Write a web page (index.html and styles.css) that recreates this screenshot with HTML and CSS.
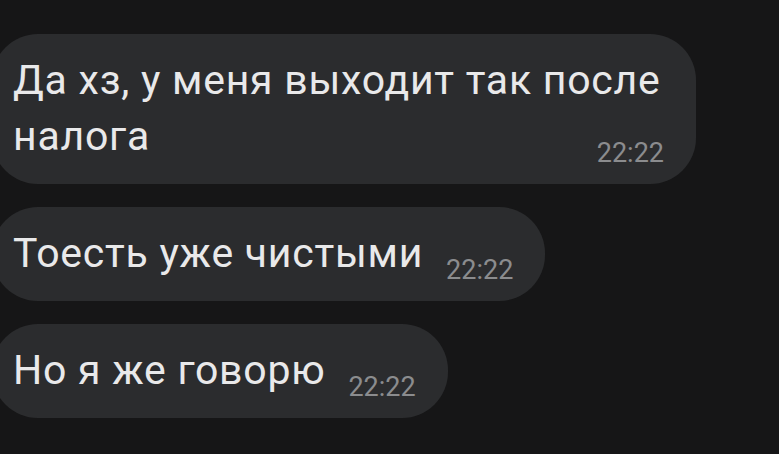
FILE: index.html
```html
<!DOCTYPE html>
<html lang="ru">
<head>
  <meta charset="UTF-8" />
  <meta name="viewport" content="width=device-width, initial-scale=1.0"/>
  <title>Чат</title>
  <link rel="stylesheet" href="styles.css">
</head>
<body>

  <div class="chat">
    <div class="bubble wide"><span class="text">Да хз, у меня выходит так после налога</span><span class="time">22:22</span></div>
    <div class="bubble"><span class="text">Тоесть уже чистыми</span><span class="time">22:22</span></div>
    <div class="bubble"><span class="text">Но я же говорю</span><span class="time">22:22</span></div>
  </div>

</body>
</html>
```

FILE: styles.css
```css
/* Тёмная тема чата */
body {
  margin: 0;
  background-color: #161617;
  font-family: Roboto, 'Noto Sans', sans-serif;
  overflow: hidden;
}

.chat {
  display: flex;
  flex-direction: column;
  align-items: flex-start;
  gap: 23px;
  padding-top: 34px;
}

.bubble {
  box-sizing: border-box;
  margin-left: -8px;
  padding: 18px 32px 20px 21px;
  background-color: #2b2c2e;
  border-radius: 46px;
  color: #e9e9ea;
  font-size: 41px;
  line-height: 56px;
  letter-spacing: 0.75px;
}

/* первое сообщение переносится на две строки */
.bubble.wide {
  max-width: 704px;
}

.time {
  float: right;
  margin: 35px 0 0 23px;
  color: #8b8c8e;
  font-size: 27px;
  line-height: 20px;
  letter-spacing: 0;
}
```
